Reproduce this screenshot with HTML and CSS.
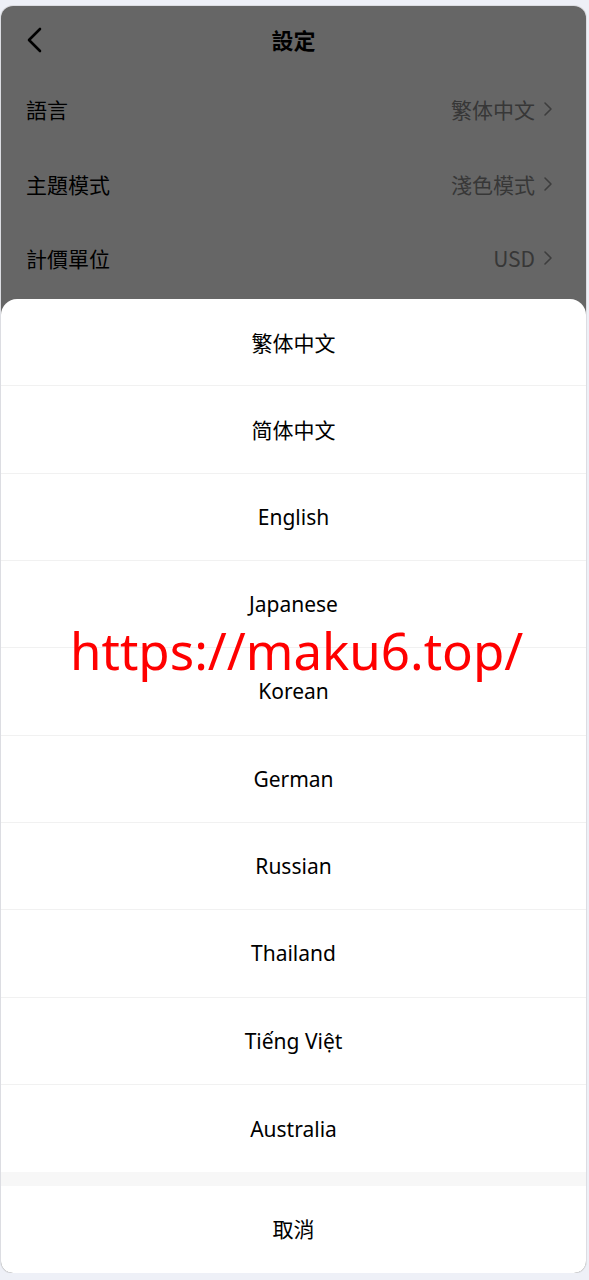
FILE: index.html
```html
<!DOCTYPE html>
<html lang="zh-Hant">
<head>
<meta charset="utf-8">
<title>設定</title>
<link rel="stylesheet" href="styles.css">
</head>
<body>
<div class="frame">
  <div class="settings">
    <header class="topbar">
      <svg class="back" width="20" height="28" viewBox="0 0 20 28"><path d="M15 3 L4 14 L15 25" fill="none" stroke="#000" stroke-width="2.6" stroke-linecap="round" stroke-linejoin="round"/></svg>
      <h1 class="title">設定</h1>
    </header>
    <div class="row"><span class="label">語言</span><span class="value">繁体中文<svg class="chev" width="10" height="16" viewBox="0 0 10 16"><path d="M2 2 L8 8 L2 14" fill="none" stroke="#999" stroke-width="1.6" stroke-linecap="round" stroke-linejoin="round"/></svg></span></div>
    <div class="row"><span class="label">主題模式</span><span class="value">淺色模式<svg class="chev" width="10" height="16" viewBox="0 0 10 16"><path d="M2 2 L8 8 L2 14" fill="none" stroke="#999" stroke-width="1.6" stroke-linecap="round" stroke-linejoin="round"/></svg></span></div>
    <div class="row"><span class="label">計價單位</span><span class="value">USD<svg class="chev" width="10" height="16" viewBox="0 0 10 16"><path d="M2 2 L8 8 L2 14" fill="none" stroke="#999" stroke-width="1.6" stroke-linecap="round" stroke-linejoin="round"/></svg></span></div>
  </div>
  <div class="mask"></div>
  <div class="sheet">
    <ul class="options">
      <li class="opt">繁体中文</li>
      <li class="opt">简体中文</li>
      <li class="opt">English</li>
      <li class="opt">Japanese</li>
      <li class="opt">Korean</li>
      <li class="opt">German</li>
      <li class="opt">Russian</li>
      <li class="opt">Thailand</li>
      <li class="opt">Tiếng Việt</li>
      <li class="opt">Australia</li>
    </ul>
    <div class="gap"></div>
    <div class="cancel">取消</div>
  </div>
  <div class="watermark">https://maku6.top/</div>
</div>
</body>
</html>
```

FILE: styles.css
```css
html, body {
  margin: 0;
  padding: 0;
}
body {
  background: #eef0f7;
  font-family: "Noto Sans", "Noto Sans CJK TC", sans-serif;
  color: #000;
}
.frame {
  position: relative;
  margin: 6px 3px 0 1px;
  height: 1267px;
  border-radius: 12px;
  overflow: hidden;
  background: #fff;
  box-shadow: 0 0 0 1px #dcdde2;
}
.settings {
  display: flex;
  flex-direction: column;
}
.topbar {
  position: relative;
  height: 66px;
  display: flex;
  align-items: center;
  justify-content: center;
}
.back {
  position: absolute;
  left: 24px;
  top: 20px;
}
.title {
  margin: 0;
  font-size: 22px;
  font-weight: 700;
  font-family: "Noto Sans CJK TC", sans-serif;
}
.row {
  height: 74.5px;
  display: flex;
  align-items: center;
  justify-content: space-between;
  padding: 0 33px 0 25px;
  font-family: "Noto Sans CJK TC", sans-serif;
  font-size: 21px;
}
.value {
  display: flex;
  align-items: center;
  gap: 8px;
  color: #8a8a8a;
}
.mask {
  position: absolute;
  inset: 0;
  background: rgba(0, 0, 0, 0.6);
}
.sheet {
  position: absolute;
  left: 0;
  right: 0;
  bottom: 0;
  top: 293px;
  background: #fff;
  border-radius: 16px 16px 0 0;
  display: flex;
  flex-direction: column;
}
.options {
  list-style: none;
  margin: 0;
  padding: 0;
}
.opt {
  box-sizing: border-box;
  height: 87.33px;
  display: flex;
  align-items: center;
  justify-content: center;
  font-size: 21px;
  font-family: "Noto Sans", "Noto Sans CJK SC", sans-serif;
  border-bottom: 1px solid #f1f1f1;
}
.opt:last-child {
  border-bottom: none;
}
.gap {
  height: 14px;
  background: #f7f7f7;
}
.cancel {
  flex: 1;
  display: flex;
  align-items: center;
  justify-content: center;
  padding-bottom: 4px;
  font-size: 21px;
  font-family: "Noto Sans CJK TC", sans-serif;
}
.watermark {
  position: absolute;
  left: 69px;
  top: 614px;
  font-family: "Noto Sans", sans-serif;
  font-size: 51px;
  color: #ff0000;
  white-space: nowrap;
  line-height: 1.2;
}
```
